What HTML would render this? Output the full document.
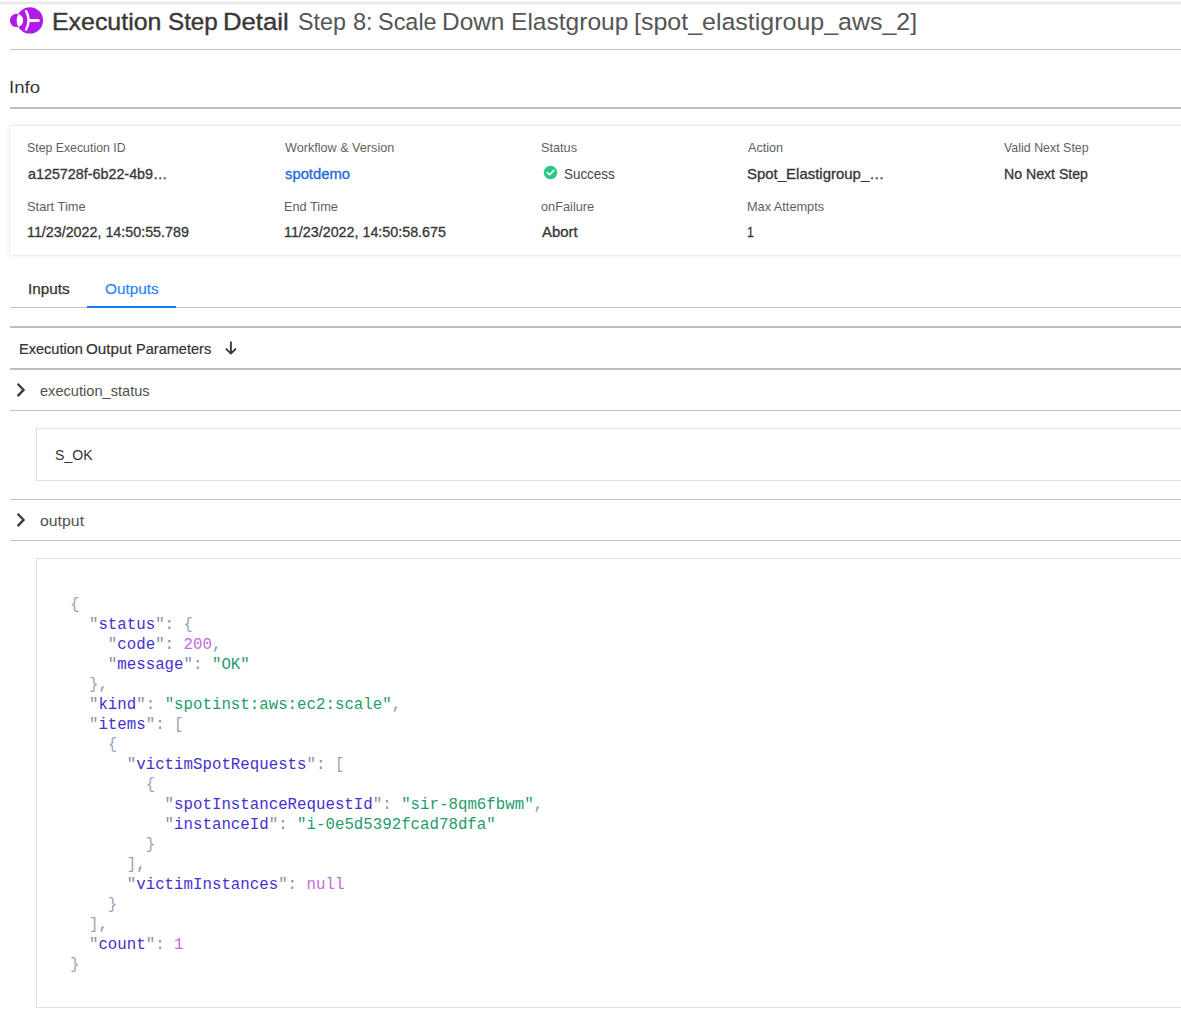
<!DOCTYPE html>
<html><head><meta charset="utf-8">
<style>
html,body{margin:0;padding:0;background:#fff;width:1181px;height:1018px;overflow:hidden;position:relative;font-family:"Liberation Sans",sans-serif;}
.a{position:absolute;}
.t{position:absolute;z-index:5;white-space:nowrap;transform-origin:0 0;line-height:1;}
.hl{position:absolute;left:10px;right:0;height:1px;background:#c4c4c4;}
.mono{font-family:"Liberation Mono",monospace;}
.jb{color:#9fa3b3}.jk{color:#4630cf}.jn{color:#c16cdb}.js{color:#1f9c6c}
</style></head><body>
<!-- top shadow -->
<div class="a" style="left:0;right:0;top:2px;height:1px;background:#e3e3e3"></div>
<div class="a" style="left:0;right:0;top:3px;height:1px;background:#efefef"></div>
<div class="a" style="left:0;right:0;top:4px;height:1px;background:#f7f7f7"></div>
<div class="a" style="left:0;right:0;top:5px;height:1px;background:#fcfcfc"></div>

<!-- logo -->
<svg class="a" style="left:0;top:0" width="50" height="40" viewBox="0 0 50 40">
  <path fill="#b01aea" fill-rule="evenodd" d="M9.9,20.45a6.65,6.65 0 1,0 13.3,0a6.65,6.65 0 1,0 -13.3,0Z M16.7,20.4a13.2,13.2 0 1,0 26.4,0a13.2,13.2 0 1,0 -26.4,0Z"/>
  <path fill="none" stroke="#fff" stroke-width="2.5" stroke-linecap="round" d="M26.1,11.2 A19,19 0 0 1 26.1,29.5"/>
  <path fill="none" stroke="#fff" stroke-width="3.2" stroke-linecap="round" d="M29.5,20.5 L38.2,20.5"/>
</svg>

<div class="t" id="t1" style="left:51.65px;top:9.53px;font-size:24.3px;color:#383838;font-weight:normal;-webkit-text-stroke:0.4px #383838;transform:scaleX(1.0250);">Execution</div>
<div class="t" id="t2" style="left:167.80px;top:9.53px;font-size:24.3px;color:#383838;font-weight:normal;-webkit-text-stroke:0.4px #383838;transform:scaleX(0.9958);">Step</div>
<div class="t" id="t3" style="left:223.38px;top:9.53px;font-size:24.3px;color:#383838;font-weight:normal;-webkit-text-stroke:0.4px #383838;transform:scaleX(1.0576);">Detail</div>
<div class="t" id="s1" style="left:298.44px;top:9.53px;font-size:24.3px;color:#555;font-weight:normal;transform:scaleX(0.9583);">Step</div>
<div class="t" id="s2" style="left:353.13px;top:9.53px;font-size:24.3px;color:#555;font-weight:normal;transform:scaleX(0.9706);">8:</div>
<div class="t" id="s3" style="left:377.54px;top:9.53px;font-size:24.3px;color:#555;font-weight:normal;transform:scaleX(0.9644);">Scale</div>
<div class="t" id="s4" style="left:441.99px;top:9.53px;font-size:24.3px;color:#555;font-weight:normal;transform:scaleX(1.0051);">Down</div>
<div class="t" id="s5" style="left:510.88px;top:9.53px;font-size:24.3px;color:#555;font-weight:normal;transform:scaleX(1.0106);">Elastgroup</div>
<div class="t" id="s6" style="left:634.44px;top:9.53px;font-size:24.3px;color:#555;font-weight:normal;transform:scaleX(1.0276);">[spot_elastigroup_aws_2]</div>
<div class="t" id="info" style="left:8.95px;top:78.55px;font-size:17.3px;color:#383838;font-weight:normal;transform:scaleX(1.0769);">Info</div>
<div class="t" id="l1" style="left:26.87px;top:140.62px;font-size:13.2px;color:#5f5f5f;font-weight:normal;transform:scaleX(0.9337);">Step Execution ID</div>
<div class="t" id="l2" style="left:26.92px;top:199.72px;font-size:13.2px;color:#5f5f5f;font-weight:normal;transform:scaleX(0.9763);">Start Time</div>
<div class="t" id="l3" style="left:284.90px;top:140.62px;font-size:13.2px;color:#5f5f5f;font-weight:normal;transform:scaleX(0.9575);">Workflow &amp; Version</div>
<div class="t" id="l4" style="left:283.93px;top:199.72px;font-size:13.2px;color:#5f5f5f;font-weight:normal;transform:scaleX(0.9667);">End Time</div>
<div class="t" id="l5" style="left:540.94px;top:140.62px;font-size:13.2px;color:#5f5f5f;font-weight:normal;transform:scaleX(0.9639);">Status</div>
<div class="t" id="l6" style="left:540.93px;top:199.72px;font-size:13.2px;color:#5f5f5f;font-weight:normal;transform:scaleX(0.9667);">onFailure</div>
<div class="t" id="l7" style="left:747.90px;top:140.62px;font-size:13.2px;color:#5f5f5f;font-weight:normal;transform:scaleX(0.9583);">Action</div>
<div class="t" id="l8" style="left:746.94px;top:199.72px;font-size:13.2px;color:#5f5f5f;font-weight:normal;transform:scaleX(0.9641);">Max Attempts</div>
<div class="t" id="l9" style="left:1004.30px;top:140.62px;font-size:13.2px;color:#5f5f5f;font-weight:normal;transform:scaleX(0.9416);">Valid Next Step</div>
<div class="t" id="v1" style="left:27.80px;top:166.96px;font-size:14.1px;color:#363636;font-weight:normal;-webkit-text-stroke:0.3px #363636;transform:scaleX(1.0162);">a125728f-6b22-4b9…</div>
<div class="t" id="v2" style="left:26.89px;top:224.96px;font-size:14.1px;color:#363636;font-weight:normal;-webkit-text-stroke:0.3px #363636;transform:scaleX(1.0139);">11/23/2022, 14:50:55.789</div>
<div class="t" id="v3" style="left:285.30px;top:166.96px;font-size:14.1px;color:#2168d9;font-weight:normal;-webkit-text-stroke:0.3px #2168d9;transform:scaleX(1.0500);">spotdemo</div>
<div class="t" id="v4" style="left:283.89px;top:224.96px;font-size:14.1px;color:#363636;font-weight:normal;-webkit-text-stroke:0.3px #363636;transform:scaleX(1.0146);">11/23/2022, 14:50:58.675</div>
<div class="t" id="v5" style="left:541.90px;top:224.96px;font-size:14.1px;color:#363636;font-weight:normal;-webkit-text-stroke:0.3px #363636;transform:scaleX(1.0588);">Abort</div>
<div class="t" id="v6" style="left:746.84px;top:166.96px;font-size:14.1px;color:#363636;font-weight:normal;-webkit-text-stroke:0.3px #363636;transform:scaleX(1.0614);">Spot_Elastigroup_…</div>
<div class="t" id="v7" style="left:747.03px;top:224.96px;font-size:14.1px;color:#363636;font-weight:normal;-webkit-text-stroke:0.3px #363636;transform:scaleX(0.8714);">1</div>
<div class="t" id="v8" style="left:1004.10px;top:166.96px;font-size:14.1px;color:#363636;font-weight:normal;-webkit-text-stroke:0.3px #363636;transform:scaleX(1.0000);">No Next Step</div>
<div class="t" id="succ" style="left:563.61px;top:166.20px;font-size:15px;color:#444;font-weight:normal;transform:scaleX(0.8945);">Success</div>
<div class="t" id="tin" style="left:27.64px;top:281.71px;font-size:14.4px;color:#333;font-weight:normal;-webkit-text-stroke:0.25px #333;transform:scaleX(1.0632);">Inputs</div>
<div class="t" id="tout" style="left:104.53px;top:281.71px;font-size:14.4px;color:#2585f6;font-weight:normal;-webkit-text-stroke:0.15px #2585f6;transform:scaleX(1.0673);">Outputs</div>
<div class="t" id="e1" style="left:18.92px;top:342.07px;font-size:14.8px;color:#333;font-weight:normal;-webkit-text-stroke:0.2px #333;transform:scaleX(0.9841);">Execution</div>
<div class="t" id="e2" style="left:85.97px;top:342.07px;font-size:14.8px;color:#333;font-weight:normal;-webkit-text-stroke:0.2px #333;transform:scaleX(1.0273);">Output</div>
<div class="t" id="e3" style="left:135.72px;top:342.07px;font-size:14.8px;color:#333;font-weight:normal;-webkit-text-stroke:0.2px #333;transform:scaleX(0.9827);">Parameters</div>
<div class="t" id="es" style="left:40.23px;top:383.20px;font-size:15px;color:#505050;font-weight:normal;transform:scaleX(0.9739);">execution_status</div>
<div class="t" id="sok" style="left:54.99px;top:446.68px;font-size:15.5px;color:#333;font-weight:normal;transform:scaleX(0.9075);">S_OK</div>
<div class="t" id="outp" style="left:40.14px;top:513.30px;font-size:15px;color:#505050;font-weight:normal;transform:scaleX(1.0561);">output</div>
<div class="hl" style="top:49px"></div>

<div class="hl" style="top:107px;height:2px;background:#bebebe"></div>

<!-- card -->
<div class="a" style="left:10px;top:126px;width:1300px;height:129px;background:#fff;box-shadow:0 0 1px rgba(0,0,0,.2),0 0 5px rgba(0,0,0,.1)"></div>



<svg class="a" style="left:543px;top:165px" width="15" height="15" viewBox="0 0 15 15"><circle cx="7.5" cy="7.5" r="6.8" fill="#2bc785"/><path d="M4.3,7.6 L6.6,9.8 L10.8,5.4" fill="none" stroke="#fff" stroke-width="1.55" stroke-linecap="round" stroke-linejoin="round"/></svg>



<!-- tabs -->
<div class="hl" style="top:307px"></div>
<div class="a" style="left:87px;top:306px;width:89px;height:2px;background:#0b7cfa"></div>

<div class="hl" style="top:326px;height:2px;background:#bebebe"></div>
<svg class="a" style="left:222px;top:340px" width="18" height="18" viewBox="0 0 18 18"><path d="M8.9,2.2 V13.6 M4.4,9.1 L8.9,13.6 L13.4,9.1" fill="none" stroke="#383838" stroke-width="1.9" stroke-linecap="round" stroke-linejoin="round"/></svg>
<div class="hl" style="top:368px;height:2px;background:#bebebe"></div>

<svg class="a" style="left:14px;top:381px" width="14" height="18" viewBox="0 0 14 18"><path d="M3.6,2.7 L9.6,8.9 L3.6,15.1" fill="none" stroke="#3a3a3a" stroke-width="2.3" stroke-linecap="butt" stroke-linejoin="miter"/></svg>
<div class="hl" style="top:410px"></div>

<div class="a" style="left:36px;top:428px;width:1300px;height:51px;border:1px solid #e1e1e1;background:#fff"></div>
<div class="hl" style="top:499px"></div>

<svg class="a" style="left:14px;top:511px" width="14" height="18" viewBox="0 0 14 18"><path d="M3.6,2.7 L9.6,8.9 L3.6,15.1" fill="none" stroke="#3a3a3a" stroke-width="2.3" stroke-linecap="butt" stroke-linejoin="miter"/></svg>
<div class="hl" style="top:540px"></div>

<div class="a" style="left:36px;top:558px;width:1300px;height:448px;border:1px solid #e1e1e1;background:#fff"></div>

<!-- JSON -->
<div class="a mono" id="json" style="left:70px;top:595px;font-size:15.77px;line-height:20px;white-space:pre;color:#8b90a2"><span class="jb">{</span>
  "<span class="jk">status</span>": <span class="jb">{</span>
    "<span class="jk">code</span>": <span class="jn">200</span>,
    "<span class="jk">message</span>": <span class="js">"OK"</span>
  <span class="jb">}</span>,
  "<span class="jk">kind</span>": <span class="js">"spotinst:aws:ec2:scale"</span>,
  "<span class="jk">items</span>": <span class="jb">[</span>
    <span class="jb">{</span>
      "<span class="jk">victimSpotRequests</span>": <span class="jb">[</span>
        <span class="jb">{</span>
          "<span class="jk">spotInstanceRequestId</span>": <span class="js">"sir-8qm6fbwm"</span>,
          "<span class="jk">instanceId</span>": <span class="js">"i-0e5d5392fcad78dfa"</span>
        <span class="jb">}</span>
      <span class="jb">]</span>,
      "<span class="jk">victimInstances</span>": <span class="jn">null</span>
    <span class="jb">}</span>
  <span class="jb">]</span>,
  "<span class="jk">count</span>": <span class="jn">1</span>
<span class="jb">}</span></div>
</body></html>
